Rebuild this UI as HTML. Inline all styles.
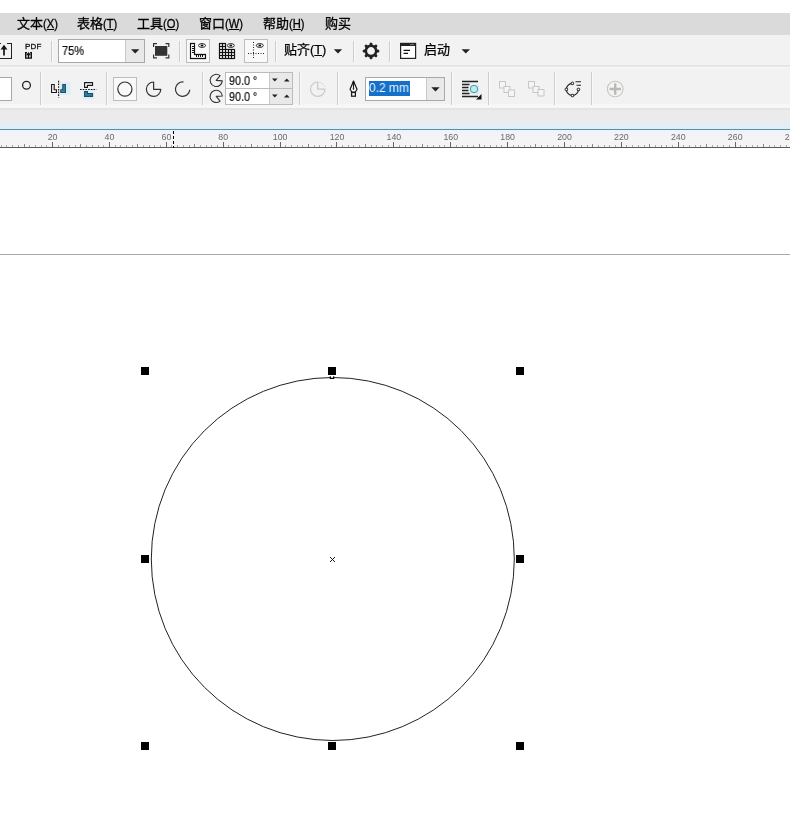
<!DOCTYPE html>
<html lang="zh-CN"><head><meta charset="utf-8"><title>CorelDRAW</title>
<style>
html,body{margin:0;padding:0;background:#fff;}
body{width:790px;height:831px;position:relative;overflow:hidden;font-family:"Liberation Sans","Noto Sans CJK SC",sans-serif;color:#1a1a1a;}
.abs{position:absolute;}
#menubar{left:0;top:13px;width:790px;height:22px;background:#dadada;}
.mi{position:absolute;top:15px;height:18px;line-height:18px;font-size:13px;white-space:nowrap;color:#000;-webkit-text-stroke:0.3px #000;margin-left:-0.5px;will-change:transform}
.mi i,.lat{font-style:normal;font-size:13px;display:inline-block;transform:scaleX(.86);transform-origin:0 50%;margin-right:-3px;}
.mi u{text-decoration:underline;text-underline-offset:1px;}
#tb{left:0;top:35px;width:790px;height:74px;background:#f2f2f2;}
.hl{position:absolute;left:0;width:790px;height:1px;}
.vsep{position:absolute;width:1px;background:#cdcdcd;box-shadow:1px 0 0 #fafafa;}
.vsep2{position:absolute;width:1px;background:#fafafa;}
.box{position:absolute;box-sizing:border-box;border:1px solid #a8a8a8;background:#fff;}
.btnsel{position:absolute;box-sizing:border-box;border:1px solid #bdbdbd;background:#f9f9f9;}
.txt{position:absolute;white-space:nowrap;will-change:transform;-webkit-text-stroke:0.2px currentColor;}
#icons{position:absolute;left:0;top:0;}
#ruler text{font-family:"Liberation Sans",sans-serif;font-size:8.8px;fill:#6a6a6a;}
</style></head><body>
<div id="menubar" class="abs"></div>
<div class="mi" style="left:17px">文本<i>(<u>X</u>)</i></div>
<div class="mi" style="left:77px">表格<i>(<u>T</u>)</i></div>
<div class="mi" style="left:137px">工具<i>(<u>O</u>)</i></div>
<div class="mi" style="left:199px">窗口<i>(<u>W</u>)</i></div>
<div class="mi" style="left:263px">帮助<i>(<u>H</u>)</i></div>
<div class="mi" style="left:325px">购买</div>

<div id="tb" class="abs"></div>
<div class="hl" style="top:65px;height:2px;background:#e5e5e5"></div>
<div class="hl" style="top:67px;background:#f9f9f9"></div>
<div class="hl" style="top:104px;height:4px;background:#f7f7f7"></div>
<div class="hl" style="top:108px;height:2px;background:#e4e4e4"></div>
<div class="abs" style="left:0;top:110px;width:790px;height:19px;background:linear-gradient(#e9ebec 0,#ecebea 55%,#e4eef4 75%,#dceef9 100%)"></div>
<div class="abs" style="left:0;top:129px;width:790px;height:1px;background:#5d8f9c"></div>
<div class="abs" style="left:0;top:130px;width:790px;height:17px;background:linear-gradient(#eaf4fb 0,#f4f3f6 35%,#f5f4f5 100%)"></div>
<div class="abs" style="left:0;top:147px;width:790px;height:1px;background:#5a5a5a"></div>

<!-- row1 controls -->
<div class="box" style="left:58px;top:39px;width:87px;height:24px;"></div>
<div class="abs" style="left:125px;top:40px;width:19px;height:22px;background:#e9e9e9;border-left:1px solid #c9c9c9;box-sizing:border-box"></div>
<div class="txt" style="left:62px;top:43px;font-size:12.5px;line-height:16px;color:#111;transform:scaleX(.88);transform-origin:0 50%">75%</div>
<div class="btnsel" style="left:186px;top:39px;width:24px;height:24px;"></div>
<div class="btnsel" style="left:244px;top:39px;width:24px;height:24px;"></div>
<div class="txt" style="left:25px;top:42px;font-size:8px;line-height:10px;color:#111;letter-spacing:0.2px;-webkit-text-stroke:0.3px #111">PDF</div>
<div class="txt" style="left:284px;top:41px;font-size:13px;line-height:18px;color:#000;-webkit-text-stroke:0.25px #000">贴齐<i class="lat" style="transform:scaleX(.98)">(<u style="text-underline-offset:1px">T</u>)</i></div>
<div class="txt" style="left:424px;top:41px;font-size:13px;line-height:18px;color:#000;-webkit-text-stroke:0.25px #000">启动</div>

<!-- row2 controls -->
<div class="box" style="left:-3px;top:77px;width:15px;height:24px;"></div>
<div class="btnsel" style="left:113px;top:77px;width:24px;height:24px;"></div>
<div class="box" style="left:225px;top:72px;width:68px;height:17px;border-color:#bbb"></div>
<div class="box" style="left:225px;top:88px;width:68px;height:17px;border-color:#bbb"></div>
<div class="abs" style="left:269px;top:73px;width:23px;height:15px;background:#e9e9e9;border-left:1px solid #c9c9c9;box-sizing:border-box"></div>
<div class="abs" style="left:269px;top:89px;width:23px;height:15px;background:#e9e9e9;border-left:1px solid #c9c9c9;box-sizing:border-box"></div>
<div class="txt" style="left:229px;top:74px;font-size:12.5px;line-height:15px;color:#111;transform:scaleX(.86);transform-origin:0 50%">90.0 °</div>
<div class="txt" style="left:229px;top:90px;font-size:12.5px;line-height:15px;color:#111;transform:scaleX(.86);transform-origin:0 50%">90.0 °</div>
<div class="box" style="left:365px;top:77px;width:80px;height:24px;"></div>
<div class="abs" style="left:426px;top:78px;width:18px;height:22px;background:#e9e9e9;border-left:1px solid #c9c9c9;box-sizing:border-box"></div>
<div class="abs" style="left:369px;top:81px;width:41px;height:15px;background:#1470c8"></div>
<div class="txt" style="left:369px;top:81px;font-size:12.5px;line-height:15px;color:#eef6ff;-webkit-text-stroke:0;transform:scaleX(.96);transform-origin:0 50%">0.2 mm</div>

<!-- separators row1 -->
<div class="vsep" style="left:51px;top:41px;height:21px"></div>
<div class="vsep" style="left:179px;top:41px;height:21px"></div>
<div class="vsep" style="left:275px;top:41px;height:21px"></div>
<div class="vsep" style="left:353px;top:41px;height:21px"></div>
<div class="vsep" style="left:389px;top:41px;height:21px"></div>
<!-- separators row2 -->
<div class="vsep" style="left:40px;top:72px;height:33px"></div>
<div class="vsep" style="left:106px;top:72px;height:33px"></div>
<div class="vsep" style="left:202px;top:72px;height:33px"></div>
<div class="vsep" style="left:299px;top:72px;height:33px"></div>
<div class="vsep" style="left:337px;top:72px;height:33px"></div>
<div class="vsep" style="left:451px;top:72px;height:33px"></div>
<div class="vsep" style="left:488px;top:72px;height:33px"></div>
<div class="vsep" style="left:554px;top:72px;height:33px"></div>
<div class="vsep" style="left:591px;top:72px;height:33px"></div>

<!-- ICONS -->
<svg id="icons" width="790" height="150" viewBox="0 0 790 150">
<!--ICONS_BEGIN-->
<g id="row1" fill="none" stroke="#222" stroke-width="1">
<!-- export -->
<g shape-rendering="crispEdges">
<path d="M-2 43.5H1M7 43.5H12M11.5 43V58.5M-2 58H12" stroke="#222" stroke-width="1"/>
</g>
<path d="M4 47V55.6" stroke="#111" stroke-width="1.7"/>
<path d="M4 44.8L7.4 49.4H0.6Z" fill="#111" stroke="none"/>
<!-- pdf small icon -->
<path d="M25.7 52.6V58.1H31.3V52.6" stroke="#111" stroke-width="1.4"/>
<path d="M25 52.6H27M30 52.6H32" stroke="#111" stroke-width="1.2"/>
<path d="M28.5 52L30.9 55.2H26.1Z" fill="#111" stroke="none"/>
<path d="M28.5 54V58.4" stroke="#111" stroke-width="1.4"/>
<!-- zoom dropdown arrow -->
<path d="M131 49.3H139.4L135.2 53.5Z" fill="#222" stroke="none"/>
<!-- fullscreen -->
<rect x="155" y="46" width="12.3" height="9.8" fill="#333" stroke="none"/>
<path d="M153.6 47V43.6H157M165.5 43.6H168.8V47M168.8 54.5V57.8H165.5M157 57.8H153.6V54.5" stroke="#333" stroke-width="1.2"/>
<!-- L ruler -->
<g shape-rendering="crispEdges">
<path d="M190.5 43.5H194.5V54.5H205.5V58.5H190.5Z" stroke="#111" stroke-width="1" fill="#fff"/>
<g fill="#111" stroke="none"><rect x="192" y="46" width="2" height="1"/><rect x="192" y="48" width="2" height="1"/><rect x="192" y="50" width="2" height="1"/><rect x="192" y="52" width="2" height="1"/>
<rect x="196" y="55" width="1" height="2"/><rect x="198" y="55" width="1" height="2"/><rect x="200" y="55" width="1" height="2"/><rect x="202" y="55" width="1" height="2"/></g>
</g>
<path d="M190.5 43.5H194.5V54.5H205.5V58.5H190.5Z" stroke="#111" stroke-width="1.3" fill="none" opacity="0.55"/>
<ellipse cx="202" cy="45.5" rx="3.5" ry="1.9" stroke="#222" stroke-width="1" fill="#fff"/>
<ellipse cx="202" cy="45.5" rx="1.4" ry="0.9" fill="#111" stroke="none"/>
<!-- grid -->
<path d="M219.5 43.5H225.5V49.5H234.5V58.5H219.5Z" fill="#fff" stroke="none"/>
<path d="M219.5 43.5H225.5M219.5 46.5H225.5M219.5 49.5H234.5M219.5 52.5H234.5M219.5 55.5H234.5M219.5 58.5H234.5M219.5 43.5V58.5M222.5 43.5V58.5M225.5 43.5V58.5M228.5 49.5V58.5M231.5 49.5V58.5M234.5 49.5V58.5" stroke="#111" stroke-width="1" fill="none" shape-rendering="crispEdges" stroke-linecap="square"/>
<path d="M219.5 43.5H225.5M219.5 46.5H225.5M219.5 49.5H234.5M219.5 52.5H234.5M219.5 55.5H234.5M219.5 58.5H234.5M219.5 43.5V58.5M222.5 43.5V58.5M225.5 43.5V58.5M228.5 49.5V58.5M231.5 49.5V58.5M234.5 49.5V58.5" stroke="#111" stroke-width="1.5" fill="none" opacity="0.45"/>
<ellipse cx="230.8" cy="45.5" rx="3.5" ry="1.9" stroke="#222" stroke-width="1" fill="#fff"/>
<ellipse cx="230.8" cy="45.5" rx="1.4" ry="0.9" fill="#111" stroke="none"/>
<!-- guidelines -->
<path d="M253.5 42V59" stroke="#222" stroke-width="1" stroke-dasharray="1 1.5"/>
<path d="M248 53.5H264" stroke="#222" stroke-width="1" stroke-dasharray="1 1.5"/>
<ellipse cx="259.8" cy="45.5" rx="3.5" ry="1.9" stroke="#222" stroke-width="1" fill="#fff"/>
<ellipse cx="259.8" cy="45.5" rx="1.4" ry="0.9" fill="#111" stroke="none"/>
<!-- snap arrow -->
<path d="M333.8 49.3H342.2L338 53.5Z" fill="#222" stroke="none"/>
<!-- gear -->
<g transform="translate(371 50.9)">
<circle r="5.2" stroke="#222" stroke-width="2.6" fill="none"/>
<g stroke="#222" stroke-width="3" stroke-linecap="round">
<path d="M0 -6.4V-6.9"/><path d="M0 6.4V6.9"/><path d="M-6.4 0H-6.9"/><path d="M6.4 0H6.9"/>
<path d="M4.53 4.53L4.88 4.88"/><path d="M-4.53 4.53L-4.88 4.88"/><path d="M4.53 -4.53L4.88 -4.88"/><path d="M-4.53 -4.53L-4.88 -4.88"/>
</g></g>
<!-- window icon -->
<rect x="400.6" y="43.4" width="15" height="15" stroke="#222" stroke-width="1.2" fill="#fff"/>
<path d="M400.6 44.8H415.6" stroke="#222" stroke-width="2.4"/>
<path d="M410.5 44.6H411.5M412.5 44.6H413.5" stroke="#fff" stroke-width="0.8"/>
<path d="M403.6 50.4H410M403.6 53.4H408" stroke="#111" stroke-width="1.4"/>
<!-- start arrow -->
<path d="M461.6 49.3H470L465.8 53.5Z" fill="#222" stroke="none"/>
</g>

<g id="row2" fill="none" stroke="#333" stroke-width="1.2">
<circle cx="26.5" cy="85.3" r="3.9" stroke="#222" stroke-width="1.3"/>
<!-- mirror H -->
<path d="M51.6 84.5H54.2V89.7H56.4V92.5H51.6Z" stroke="#1a1a1a" stroke-width="1.15" fill="#fff"/>
<rect x="59.5" y="82" width="11" height="13" fill="#dbeef8" stroke="none"/>
<path d="M58.6 80.8V97.6" stroke="#111" stroke-width="1.1" stroke-dasharray="1.6 1.1"/>
<path d="M65.4 84.5H62.8V89.7H60.8V92.5H65.4Z" stroke="#1d4f68" stroke-width="1.15" fill="#3d83ab"/>
<!-- mirror V -->
<path d="M84.6 82.6H92.5V85.3H87.4V87.3H84.6Z" stroke="#1a1a1a" stroke-width="1.15" fill="#fff"/>
<rect x="82.5" y="90" width="12" height="9" fill="#dbeef8" stroke="none"/>
<path d="M80 89.5H96.5" stroke="#111" stroke-width="1.1" stroke-dasharray="1.6 1.1"/>
<path d="M84.6 96.3H92.5V93.6H87.4V91.6H84.6Z" stroke="#1d4f68" stroke-width="1.15" fill="#3d83ab"/>
<!-- ellipse / pie / arc -->
<circle cx="124.9" cy="89.1" r="7.1" stroke="#333" stroke-width="1.2"/>
<path d="M153.6 89.3V82A7.2 7.2 0 1 0 160.8 89.3Z" stroke="#333" stroke-width="1.2" stroke-linejoin="round"/>
<path d="M183.6 82A7.2 7.2 0 1 0 189.8 89.8" stroke="#333" stroke-width="1.2"/>
<!-- angle icons -->
<path d="M216.2 80.4L220.1 75.7A6.1 6.1 0 1 0 222.3 80.9Z" stroke="#333" stroke-width="1.1" stroke-linejoin="round"/>
<path d="M216.2 96.4L222.3 96A6.1 6.1 0 1 0 220.1 101.1Z" stroke="#333" stroke-width="1.1" stroke-linejoin="round"/>
<!-- spinner arrows -->
<g fill="#222" stroke="none">
<path d="M272 78.5H277.6L274.8 81.5Z"/><path d="M284 81.5H289.6L286.8 78.5Z"/>
<path d="M272 94.5H277.6L274.8 97.5Z"/><path d="M284 97.5H289.6L286.8 94.5Z"/>
</g>
<!-- disabled pie -->
<path d="M317.7 89.2V82A7.2 7.2 0 1 0 324.9 89.2Z" stroke="#c9c9c9" stroke-width="1.2" stroke-linejoin="round"/>
<path d="M319.5 82.2A7.2 7.2 0 0 1 324.7 87.4" stroke="#d0d0d0" stroke-width="1.2" stroke-dasharray="1.3 1.6"/>
<!-- pen nib -->
<path d="M353.5 81.2L350.1 89.2L351.9 92.2H355.2L357 89.2Z" stroke="#1a1a1a" stroke-width="1.25" fill="#fff" stroke-linejoin="round"/>
<path d="M352.7 83.2L353.5 80.8L354.3 83.2Z" fill="#1a1a1a" stroke="#1a1a1a" stroke-width="0.8"/>
<path d="M353.5 81.5V88.6" stroke="#1a1a1a" stroke-width="1.1"/>
<circle cx="353.5" cy="88.8" r="0.9" fill="#1a1a1a" stroke="none"/>
<rect x="351.6" y="92.5" width="3.8" height="3.7" stroke="#1a1a1a" stroke-width="1.25" fill="#fff"/>
<!-- linewidth dropdown arrow -->
<path d="M431.3 87.3H439.7L435.5 91.5Z" fill="#222" stroke="none"/>
<!-- wrap text -->
<rect x="470" y="85" width="9" height="9" fill="#d5ecf7" stroke="none"/>
<path d="M462 81.6H478M462 96.4H478" stroke="#222" stroke-width="1.5"/>
<path d="M462 84.5H469.5M462 87.5H468.5M462 90.5H468.5M462 93.5H469.5" stroke="#222" stroke-width="1.5"/>
<circle cx="474" cy="89" r="3.7" fill="#bfeaf2" stroke="#4a9aa8" stroke-width="1"/>
<path d="M481.5 94V99.5H476Z" fill="#111" stroke="none"/>
<!-- disabled combine icons -->
<g stroke="#c6c6c6" stroke-width="1" fill="#f5f5f5">
<rect x="499.5" y="81.5" width="6" height="6.5"/><rect x="504" y="86.5" width="6" height="6"/><rect x="508.5" y="90" width="6" height="6.5"/>
<rect x="528.5" y="81.5" width="6" height="6.5"/><rect x="533" y="86.5" width="6" height="6"/><rect x="538" y="89.5" width="6" height="6.5"/>
</g>
<!-- convert to curves -->
<path d="M578.4 89.4A6 6 0 1 1 572.4 83.4" stroke="#222" stroke-width="1.2"/>
<g fill="#fff" stroke="#222" stroke-width="1">
<rect x="571.2" y="82.1" width="2.5" height="2.5" rx="0.8"/><rect x="565.1" y="88.2" width="2.5" height="2.5" rx="0.8"/><rect x="577.2" y="88.2" width="2.5" height="2.5" rx="0.8"/><rect x="571.2" y="94.3" width="2.5" height="2.5" rx="0.8"/>
</g>
<path d="M575.5 81.8H581M576.5 85.2H581" stroke="#222" stroke-width="1.1"/>
<!-- plus disabled -->
<circle cx="615.2" cy="89" r="7.8" stroke="#c9c4be" stroke-width="1.1" fill="#f4f4f4"/>
<path d="M609.5 89H621M615.2 83.3V94.7" stroke="#b9b9b9" stroke-width="2.4"/>
</g>
<!--ICONS_END-->
</svg>

<!-- ruler -->
<svg id="ruler" class="abs" style="left:0;top:0" width="790" height="150" viewBox="0 0 790 150" shape-rendering="crispEdges">
<rect x="1" y="145" width="1" height="2" fill="#aaa"/><rect x="6" y="145" width="1" height="2" fill="#aaa"/><rect x="12" y="145" width="1" height="2" fill="#aaa"/><rect x="18" y="145" width="1" height="2" fill="#aaa"/><rect x="24" y="144" width="1" height="3" fill="#888"/><rect x="29" y="145" width="1" height="2" fill="#aaa"/><rect x="35" y="145" width="1" height="2" fill="#aaa"/><rect x="41" y="145" width="1" height="2" fill="#aaa"/><rect x="46" y="145" width="1" height="2" fill="#aaa"/><rect x="52" y="142" width="1" height="5" fill="#666"/><rect x="58" y="145" width="1" height="2" fill="#aaa"/><rect x="63" y="145" width="1" height="2" fill="#aaa"/><rect x="69" y="145" width="1" height="2" fill="#aaa"/><rect x="75" y="145" width="1" height="2" fill="#aaa"/><rect x="80" y="144" width="1" height="3" fill="#888"/><rect x="86" y="145" width="1" height="2" fill="#aaa"/><rect x="92" y="145" width="1" height="2" fill="#aaa"/><rect x="98" y="145" width="1" height="2" fill="#aaa"/><rect x="103" y="145" width="1" height="2" fill="#aaa"/><rect x="109" y="142" width="1" height="5" fill="#666"/><rect x="115" y="145" width="1" height="2" fill="#aaa"/><rect x="120" y="145" width="1" height="2" fill="#aaa"/><rect x="126" y="145" width="1" height="2" fill="#aaa"/><rect x="132" y="145" width="1" height="2" fill="#aaa"/><rect x="137" y="144" width="1" height="3" fill="#888"/><rect x="143" y="145" width="1" height="2" fill="#aaa"/><rect x="149" y="145" width="1" height="2" fill="#aaa"/><rect x="154" y="145" width="1" height="2" fill="#aaa"/><rect x="160" y="145" width="1" height="2" fill="#aaa"/><rect x="166" y="142" width="1" height="5" fill="#666"/><rect x="171" y="145" width="1" height="2" fill="#aaa"/><rect x="177" y="145" width="1" height="2" fill="#aaa"/><rect x="183" y="145" width="1" height="2" fill="#aaa"/><rect x="189" y="145" width="1" height="2" fill="#aaa"/><rect x="194" y="144" width="1" height="3" fill="#888"/><rect x="200" y="145" width="1" height="2" fill="#aaa"/><rect x="206" y="145" width="1" height="2" fill="#aaa"/><rect x="211" y="145" width="1" height="2" fill="#aaa"/><rect x="217" y="145" width="1" height="2" fill="#aaa"/><rect x="223" y="142" width="1" height="5" fill="#666"/><rect x="228" y="145" width="1" height="2" fill="#aaa"/><rect x="234" y="145" width="1" height="2" fill="#aaa"/><rect x="240" y="145" width="1" height="2" fill="#aaa"/><rect x="245" y="145" width="1" height="2" fill="#aaa"/><rect x="251" y="144" width="1" height="3" fill="#888"/><rect x="257" y="145" width="1" height="2" fill="#aaa"/><rect x="262" y="145" width="1" height="2" fill="#aaa"/><rect x="268" y="145" width="1" height="2" fill="#aaa"/><rect x="274" y="145" width="1" height="2" fill="#aaa"/><rect x="280" y="142" width="1" height="5" fill="#666"/><rect x="285" y="145" width="1" height="2" fill="#aaa"/><rect x="291" y="145" width="1" height="2" fill="#aaa"/><rect x="297" y="145" width="1" height="2" fill="#aaa"/><rect x="302" y="145" width="1" height="2" fill="#aaa"/><rect x="308" y="144" width="1" height="3" fill="#888"/><rect x="314" y="145" width="1" height="2" fill="#aaa"/><rect x="319" y="145" width="1" height="2" fill="#aaa"/><rect x="325" y="145" width="1" height="2" fill="#aaa"/><rect x="331" y="145" width="1" height="2" fill="#aaa"/><rect x="336" y="142" width="1" height="5" fill="#666"/><rect x="342" y="145" width="1" height="2" fill="#aaa"/><rect x="348" y="145" width="1" height="2" fill="#aaa"/><rect x="353" y="145" width="1" height="2" fill="#aaa"/><rect x="359" y="145" width="1" height="2" fill="#aaa"/><rect x="365" y="144" width="1" height="3" fill="#888"/><rect x="371" y="145" width="1" height="2" fill="#aaa"/><rect x="376" y="145" width="1" height="2" fill="#aaa"/><rect x="382" y="145" width="1" height="2" fill="#aaa"/><rect x="388" y="145" width="1" height="2" fill="#aaa"/><rect x="393" y="142" width="1" height="5" fill="#666"/><rect x="399" y="145" width="1" height="2" fill="#aaa"/><rect x="405" y="145" width="1" height="2" fill="#aaa"/><rect x="410" y="145" width="1" height="2" fill="#aaa"/><rect x="416" y="145" width="1" height="2" fill="#aaa"/><rect x="422" y="144" width="1" height="3" fill="#888"/><rect x="427" y="145" width="1" height="2" fill="#aaa"/><rect x="433" y="145" width="1" height="2" fill="#aaa"/><rect x="439" y="145" width="1" height="2" fill="#aaa"/><rect x="444" y="145" width="1" height="2" fill="#aaa"/><rect x="450" y="142" width="1" height="5" fill="#666"/><rect x="456" y="145" width="1" height="2" fill="#aaa"/><rect x="462" y="145" width="1" height="2" fill="#aaa"/><rect x="467" y="145" width="1" height="2" fill="#aaa"/><rect x="473" y="145" width="1" height="2" fill="#aaa"/><rect x="479" y="144" width="1" height="3" fill="#888"/><rect x="484" y="145" width="1" height="2" fill="#aaa"/><rect x="490" y="145" width="1" height="2" fill="#aaa"/><rect x="496" y="145" width="1" height="2" fill="#aaa"/><rect x="501" y="145" width="1" height="2" fill="#aaa"/><rect x="507" y="142" width="1" height="5" fill="#666"/><rect x="513" y="145" width="1" height="2" fill="#aaa"/><rect x="518" y="145" width="1" height="2" fill="#aaa"/><rect x="524" y="145" width="1" height="2" fill="#aaa"/><rect x="530" y="145" width="1" height="2" fill="#aaa"/><rect x="535" y="144" width="1" height="3" fill="#888"/><rect x="541" y="145" width="1" height="2" fill="#aaa"/><rect x="547" y="145" width="1" height="2" fill="#aaa"/><rect x="553" y="145" width="1" height="2" fill="#aaa"/><rect x="558" y="145" width="1" height="2" fill="#aaa"/><rect x="564" y="142" width="1" height="5" fill="#666"/><rect x="570" y="145" width="1" height="2" fill="#aaa"/><rect x="575" y="145" width="1" height="2" fill="#aaa"/><rect x="581" y="145" width="1" height="2" fill="#aaa"/><rect x="587" y="145" width="1" height="2" fill="#aaa"/><rect x="592" y="144" width="1" height="3" fill="#888"/><rect x="598" y="145" width="1" height="2" fill="#aaa"/><rect x="604" y="145" width="1" height="2" fill="#aaa"/><rect x="609" y="145" width="1" height="2" fill="#aaa"/><rect x="615" y="145" width="1" height="2" fill="#aaa"/><rect x="621" y="142" width="1" height="5" fill="#666"/><rect x="626" y="145" width="1" height="2" fill="#aaa"/><rect x="632" y="145" width="1" height="2" fill="#aaa"/><rect x="638" y="145" width="1" height="2" fill="#aaa"/><rect x="644" y="145" width="1" height="2" fill="#aaa"/><rect x="649" y="144" width="1" height="3" fill="#888"/><rect x="655" y="145" width="1" height="2" fill="#aaa"/><rect x="661" y="145" width="1" height="2" fill="#aaa"/><rect x="666" y="145" width="1" height="2" fill="#aaa"/><rect x="672" y="145" width="1" height="2" fill="#aaa"/><rect x="678" y="142" width="1" height="5" fill="#666"/><rect x="683" y="145" width="1" height="2" fill="#aaa"/><rect x="689" y="145" width="1" height="2" fill="#aaa"/><rect x="695" y="145" width="1" height="2" fill="#aaa"/><rect x="700" y="145" width="1" height="2" fill="#aaa"/><rect x="706" y="144" width="1" height="3" fill="#888"/><rect x="712" y="145" width="1" height="2" fill="#aaa"/><rect x="717" y="145" width="1" height="2" fill="#aaa"/><rect x="723" y="145" width="1" height="2" fill="#aaa"/><rect x="729" y="145" width="1" height="2" fill="#aaa"/><rect x="735" y="142" width="1" height="5" fill="#666"/><rect x="740" y="145" width="1" height="2" fill="#aaa"/><rect x="746" y="145" width="1" height="2" fill="#aaa"/><rect x="752" y="145" width="1" height="2" fill="#aaa"/><rect x="757" y="145" width="1" height="2" fill="#aaa"/><rect x="763" y="144" width="1" height="3" fill="#888"/><rect x="769" y="145" width="1" height="2" fill="#aaa"/><rect x="774" y="145" width="1" height="2" fill="#aaa"/><rect x="780" y="145" width="1" height="2" fill="#aaa"/><rect x="786" y="145" width="1" height="2" fill="#aaa"/><rect x="791" y="142" width="1" height="5" fill="#666"/>
<g shape-rendering="auto"><text x="52.6" y="139.8" text-anchor="middle">20</text><text x="109.5" y="139.8" text-anchor="middle">40</text><text x="166.4" y="139.8" text-anchor="middle">60</text><text x="223.2" y="139.8" text-anchor="middle">80</text><text x="280.1" y="139.8" text-anchor="middle">100</text><text x="337.0" y="139.8" text-anchor="middle">120</text><text x="393.9" y="139.8" text-anchor="middle">140</text><text x="450.8" y="139.8" text-anchor="middle">160</text><text x="507.6" y="139.8" text-anchor="middle">180</text><text x="564.5" y="139.8" text-anchor="middle">200</text><text x="621.4" y="139.8" text-anchor="middle">220</text><text x="678.3" y="139.8" text-anchor="middle">240</text><text x="735.2" y="139.8" text-anchor="middle">260</text><text x="792.0" y="139.8" text-anchor="middle">280</text></g>
<line x1="173.5" y1="131" x2="173.5" y2="148" stroke="#000" stroke-width="1" stroke-dasharray="3 2"/>
</svg>

<!-- canvas -->
<div class="abs" style="left:0;top:254px;width:790px;height:1px;background:#a9a9a9"></div>
<svg class="abs" style="left:0;top:300px" width="790" height="531" viewBox="0 300 790 531">
<circle cx="332.8" cy="559" r="181.5" fill="none" stroke="#222" stroke-width="1"/>
<g fill="#000" shape-rendering="crispEdges">
<rect x="141" y="367" width="8" height="8"/><rect x="328" y="367" width="8" height="8"/><rect x="516" y="367" width="8" height="8"/>
<rect x="141" y="555" width="8" height="8"/><rect x="516" y="555" width="8" height="8"/>
<rect x="141" y="742" width="8" height="8"/><rect x="328" y="742" width="8" height="8"/><rect x="516" y="742" width="8" height="8"/>
</g>
<path d="M330.3 376.2V378.4H333.7V376.2" fill="#fff" stroke="#000" stroke-width="1.1"/>
<g fill="#1a1a1a" shape-rendering="crispEdges"><rect x="330" y="557" width="1" height="1"/><rect x="331" y="558" width="1" height="1"/><rect x="332" y="559" width="1" height="1"/><rect x="333" y="560" width="1" height="1"/><rect x="334" y="561" width="1" height="1"/><rect x="334" y="557" width="1" height="1"/><rect x="333" y="558" width="1" height="1"/><rect x="331" y="560" width="1" height="1"/><rect x="330" y="561" width="1" height="1"/></g>
</svg>
</body></html>
